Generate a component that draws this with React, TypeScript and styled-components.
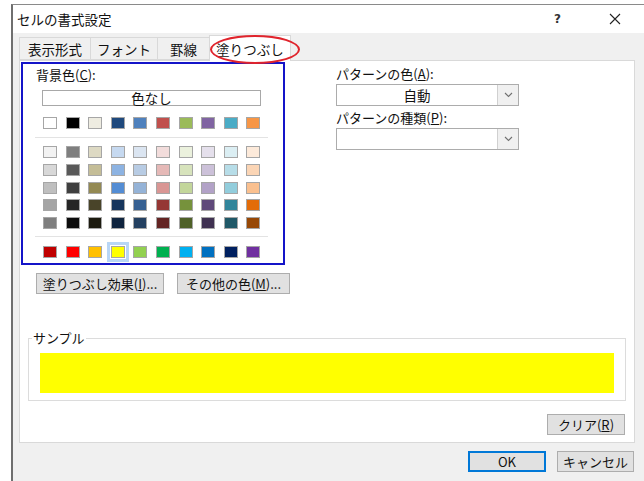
import styled, { createGlobalStyle } from 'styled-components';

const GlobalStyle = createGlobalStyle`
  html, body {
    margin: 0;
    padding: 0;
    background: #ffffff;
  }
  body {
    font-family: "Noto Sans CJK JP", "Noto Sans", sans-serif;
    font-size: 13px;
    color: #111111;
  }
`;

const themeRows = [
  ['#ffffff', '#000000', '#eeece1', '#1f497d', '#4f81bd', '#c0504d', '#9bbb59', '#8064a2', '#4bacc6', '#f79646'],
];

const tintRows = [
  ['#f2f2f2', '#7f7f7f', '#ddd9c3', '#c6d9f0', '#dbe5f1', '#f2dcdb', '#ebf1dd', '#e5e0ec', '#dbeef3', '#fdeada'],
  ['#d8d8d8', '#595959', '#c4bd97', '#8db3e2', '#b8cce4', '#e5b9b7', '#d7e3bc', '#ccc1d9', '#b7dde8', '#fbd5b5'],
  ['#bfbfbf', '#3f3f3f', '#938953', '#548dd4', '#95b3d7', '#d99694', '#c3d69b', '#b2a2c7', '#92cddc', '#fac08f'],
  ['#a5a5a5', '#262626', '#494429', '#17365d', '#366092', '#953734', '#76923c', '#5f497a', '#31859b', '#e36c09'],
  ['#7f7f7f', '#0c0c0c', '#1d1b10', '#0f243e', '#244061', '#632423', '#4f6128', '#3f3151', '#205867', '#974806'],
];

const standardRow = ['#c00000', '#ff0000', '#ffc000', '#ffff00', '#92d050', '#00b050', '#00b0f0', '#0070c0', '#002060', '#7030a0'];

const Window = styled.div`
  margin: 4px 0 0 11px;
  width: 631px;
  height: 476px;
  border-top: 1px solid #8a8a8a;
  border-left: 2px solid #6f6f6f;
  border-right: 1px solid #6f6f6f;
  display: flex;
  flex-direction: column;
  overflow: hidden;
  background: #f0f0f0;
`;

const TitleBar = styled.div`
  height: 28px;
  flex: none;
  background: #ffffff;
  display: flex;
  align-items: center;
  padding: 0 23px 0 4px;
`;

const Title = styled.span`
  font-size: 13.5px;
  flex: 1;
`;

const HelpMark = styled.span`
  font-family: "DejaVu Sans", sans-serif;
  font-size: 12px;
  font-weight: bold;
  color: #333;
  width: 55px;
`;

const CloseBox = styled.span`
  width: 12px;
  height: 28px;
  display: flex;
  align-items: center;
`;

const Body = styled.div`
  flex: 1;
  padding: 0 9px 0 6px;
  display: flex;
  flex-direction: column;
`;

const TabRow = styled.div`
  position: relative;
  height: 27px;
  display: flex;
  align-items: flex-end;
`;

const Tab = styled.div<{ $active?: boolean; $pad?: number }>`
  height: ${({ $active }) => ($active ? '25px' : '21px')};
  padding: 0 ${({ $pad }) => $pad ?? 8}px;
  margin-bottom: ${({ $active }) => ($active ? '-1px' : '0')};
  background: ${({ $active }) => ($active ? '#ffffff' : '#f0f0f0')};
  border: 1px solid #d9d9d9;
  border-bottom: ${({ $active }) => ($active ? 'none' : '1px solid #d9d9d9')};
  margin-left: -1px;
  display: flex;
  align-items: center;
  font-size: 13.5px;
  position: relative;
  z-index: ${({ $active }) => ($active ? 2 : 1)};
  &:first-child {
    margin-left: 0;
  }
`;

/* red marker drawn around the active tab */
const Circle = styled.span`
  position: absolute;
  left: 191px;
  top: 2px;
  width: 86px;
  height: 25px;
  border: 2px solid #e0242c;
  border-radius: 50%;
  z-index: 3;
`;

const Panel = styled.div`
  height: 381px;
  background: #ffffff;
  border: 1px solid #d9d9d9;
  display: flex;
  flex-direction: column;
`;

const TopSection = styled.div`
  display: flex;
  margin: 1px 0 0 1px;
`;

const ColorBox = styled.div`
  width: 260px;
  height: 199px;
  border: 2px solid #1414c8;
  display: flex;
  flex-direction: column;
`;

const Label = styled.div<{ $indent?: number; $top?: number }>`
  line-height: 16px;
  margin-top: ${({ $top }) => $top ?? 0}px;
  padding-left: ${({ $indent }) => $indent ?? 0}px;
  white-space: nowrap;
`;

const NoColor = styled.div`
  margin: 7px 0 0 19px;
  width: 217px;
  height: 14px;
  border: 1px solid #a8a8a8;
  display: flex;
  align-items: center;
  justify-content: center;
  font-size: 13.5px;
`;

const SwatchGrid = styled.div<{ $top: number }>`
  margin: ${({ $top }) => $top}px 0 0 20px;
  display: grid;
  grid-template-columns: repeat(10, 14px);
  column-gap: 8.6px;
  row-gap: 5.75px;
`;

const Swatch = styled.span<{ $color: string; $selected?: boolean }>`
  width: 14px;
  height: 12px;
  box-sizing: border-box;
  background: ${({ $color }) => $color};
  border: 1px solid #a6a6a6;
  outline: ${({ $selected }) => ($selected ? '3px solid #b8d6f6' : 'none')};
  outline-offset: 1px;
`;

const Divider = styled.div<{ $top: number }>`
  margin: ${({ $top }) => $top}px 0 0 12px;
  width: 233px;
  height: 1px;
  background: #e3e3e3;
`;

const PatternColumn = styled.div`
  margin-left: 51px;
  padding-top: 4px;
  display: flex;
  flex-direction: column;
`;

const Combo = styled.div`
  width: 181px;
  height: 20px;
  margin-top: 2px;
  border: 1px solid #acacac;
  display: flex;
`;

const ComboValue = styled.div`
  flex: 1;
  display: flex;
  align-items: center;
  justify-content: center;
  font-size: 13.5px;
`;

const ComboArrow = styled.div`
  width: 20px;
  border-left: 1px solid #d0d0d0;
  background: #f0f0f0;
  display: flex;
  align-items: center;
  justify-content: center;
`;

const ButtonRow = styled.div`
  margin: 8px 0 0 16px;
  display: flex;
  gap: 13px;
`;

const Button = styled.button<{ $width: number; $primary?: boolean }>`
  width: ${({ $width }) => $width}px;
  height: 21px;
  padding: 0;
  font-family: inherit;
  font-size: 13px;
  color: #111111;
  background: #e1e1e1;
  border: 1px solid ${({ $primary }) => ($primary ? '#0078d7' : '#adadad')};
  box-shadow: ${({ $primary }) => ($primary ? 'inset 0 0 0 1px #0078d7' : 'none')};
  display: flex;
  align-items: center;
  justify-content: center;
  white-space: nowrap;
`;

const SampleGroup = styled.fieldset`
  margin: 36px 0 0 8px;
  width: 598px;
  box-sizing: border-box;
  height: 71px;
  padding: 7px 11px 0;
  border: 1px solid #dcdcdc;
`;

const SampleLegend = styled.legend`
  padding: 0 1px;
  margin-left: -8px;
  line-height: 16px;
  font-size: 13px;
`;

const SamplePreview = styled.div<{ $color: string }>`
  height: 40px;
  background: ${({ $color }) => $color};
`;

const ClearRow = styled.div`
  margin: 13px 9px 0 0;
  display: flex;
  justify-content: flex-end;
`;

const Footer = styled.div`
  margin: 8px 1px 0 0;
  display: flex;
  justify-content: flex-end;
  gap: 11px;
`;

const Chevron = () => (
  <svg width="9" height="6" viewBox="0 0 9 6">
    <polyline points="1,1 4.5,4.5 8,1" fill="none" stroke="#707070" strokeWidth="1.1" />
  </svg>
);

const CloseIcon = () => (
  <svg width="12" height="12" viewBox="0 0 12 12">
    <path d="M1 1 L11 11 M11 1 L1 11" stroke="#222" strokeWidth="1.1" />
  </svg>
);

export default function App() {
  return (
    <>
      <GlobalStyle />
      <Window>
        <TitleBar>
          <Title>セルの書式設定</Title>
          <HelpMark>?</HelpMark>
          <CloseBox>
            <CloseIcon />
          </CloseBox>
        </TitleBar>
        <Body>
          <TabRow>
            <Tab>表示形式</Tab>
            <Tab $pad={6}>フォント</Tab>
            <Tab $pad={12}>罫線</Tab>
            <Tab $active $pad={6}>
              塗りつぶし
            </Tab>
            <Circle />
          </TabRow>
          <Panel>
            <TopSection>
              <ColorBox>
                <Label $indent={13} $top={3}>
                  背景色(<u>C</u>):
                </Label>
                <NoColor>色なし</NoColor>
                <SwatchGrid $top={11}>
                  {themeRows.flat().map((c, i) => (
                    <Swatch key={i} $color={c} />
                  ))}
                </SwatchGrid>
                <Divider $top={8} />
                <SwatchGrid $top={8}>
                  {tintRows.flat().map((c, i) => (
                    <Swatch key={i} $color={c} />
                  ))}
                </SwatchGrid>
                <Divider $top={7} />
                <SwatchGrid $top={9}>
                  {standardRow.map((c, i) => (
                    <Swatch key={i} $color={c} $selected={c === '#ffff00'} />
                  ))}
                </SwatchGrid>
              </ColorBox>
              <PatternColumn>
                <Label>
                  パターンの色(<u>A</u>):
                </Label>
                <Combo>
                  <ComboValue>自動</ComboValue>
                  <ComboArrow>
                    <Chevron />
                  </ComboArrow>
                </Combo>
                <Label $top={4}>
                  パターンの種類(<u>P</u>):
                </Label>
                <Combo>
                  <ComboValue />
                  <ComboArrow>
                    <Chevron />
                  </ComboArrow>
                </Combo>
              </PatternColumn>
            </TopSection>
            <ButtonRow>
              <Button $width={128}>
                塗りつぶし効果(<u>I</u>)...
              </Button>
              <Button $width={113}>
                その他の色(<u>M</u>)...
              </Button>
            </ButtonRow>
            <SampleGroup>
              <SampleLegend>サンプル</SampleLegend>
              <SamplePreview $color="#ffff00" />
            </SampleGroup>
            <ClearRow>
              <Button $width={78}>
                クリア(<u>R</u>)
              </Button>
            </ClearRow>
          </Panel>
          <Footer>
            <Button $width={78} $primary>
              OK
            </Button>
            <Button $width={77}>キャンセル</Button>
          </Footer>
        </Body>
      </Window>
    </>
  );
}
